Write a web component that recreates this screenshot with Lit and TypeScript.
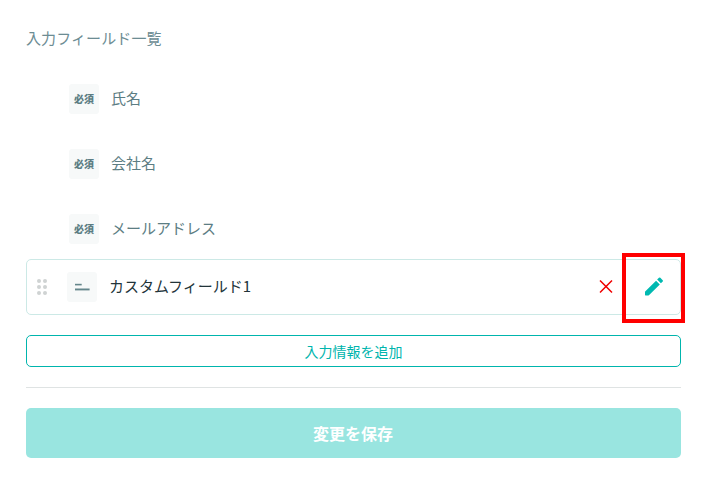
import { LitElement, html, svg, css } from "lit";
import { customElement } from "lit/decorators.js";

@customElement("app-root")
class AppRoot extends LitElement {
  static styles = css`
    :host { display: block; box-sizing: border-box; width: 704px; height: 480px; overflow: hidden; background: #fff; padding: 27px 23px 0 26px; font-family: "Noto Sans CJK JP", sans-serif; font-size: 15px; color: #5c7d83; }
    * { box-sizing: border-box; }
    h1 { margin: 0; font-size: 15px; line-height: 22px; letter-spacing: 0.1px; font-weight: 400; color: #6c8c93; }
    .list { padding-top: 17px; }
    .row { height: 65px; padding-left: 43px; display: flex; align-items: center; gap: 12px; }
    .label { padding-bottom: 2px; }
    .tag { width: 30px; height: 30px; border-radius: 3px; background: #f7f9f9; display: flex; align-items: center; justify-content: center; font-size: 10px; font-weight: 900; }
    .custom { position: relative; height: 56px; border: 1px solid #cce9e6; border-radius: 5px; display: flex; align-items: center; color: #22343a; padding-left: 10px; margin-top: -2px; }
    .custom .tag { margin: 0 12px 0 20px; }
    .name { flex: 1; padding-bottom: 3px; }
    svg { display: block; }
    .close { margin-right: 29px; }
    .edit { margin-right: 14px; }
    .mark { position: absolute; left: 595px; top: -7px; width: 63px; height: 70px; border: 4px solid #f00; }
    .add, .save { display: flex; align-items: center; justify-content: center; width: 100%; font-family: inherit; padding: 0; border-radius: 5px; }
    .add { height: 32px; margin-top: 20px; border: 1px solid #00b5ad; background: #fff; color: #00b5ad; font-size: 14px; }
    .rule { height: 1px; background: #dfe3e3; margin: 20px 0; }
    .save { height: 50px; border: 0; padding-right: 1px; background: #99e5e0; color: #fff; font-size: 16px; font-weight: 700; }
  `;
  render() {
    return html`
      <h1>入力フィールド一覧</h1>
      <div class="list">${["氏名", "会社名", "メールアドレス"].map((n) => html`<div class="row"><span class="tag">必須</span><span class="label">${n}</span></div>`)}</div>
      <div class="custom">
        <svg width="10" height="16" viewBox="0 0 10 16" fill="#cfd3d3">${[2, 8, 14].map((y) => svg`<circle cx="2" cy=${y} r="2"/><circle cx="8" cy=${y} r="2"/>`)}</svg>
        <span class="tag"><svg width="30" height="30" viewBox="0 0 30 30" fill="#64868b"><rect x="8" y="11.8" width="6.7" height="1.6"/><rect x="8" y="16.5" width="14.6" height="1.9"/></svg></span>
        <span class="name">カスタムフィールド1</span>
        <svg class="close" width="14" height="14" viewBox="0 0 14 14" fill="none" stroke="#f00000" stroke-width="1.5"><path d="M1 .5 13 12.5M13 .5 1 12.5"/></svg>
        <svg class="edit" width="24" height="24" viewBox="0 0.5 24 24" fill="#00b9b1"><path d="M3 17.46v3.04c0 .28.22.5.5.5h3.04c.13 0 .26-.05.35-.15L17.81 9.94l-3.75-3.75L3.15 17.1c-.1.1-.15.22-.15.36zM20.71 7.04a1 1 0 0 0 0-1.41l-2.34-2.34a1 1 0 0 0-1.41 0l-1.83 1.83 3.75 3.75 1.83-1.83z"/></svg>
        <div class="mark"></div>
      </div>
      <button class="add">入力情報を追加</button>
      <div class="rule"></div>
      <button class="save">変更を保存</button>`;
  }
}
